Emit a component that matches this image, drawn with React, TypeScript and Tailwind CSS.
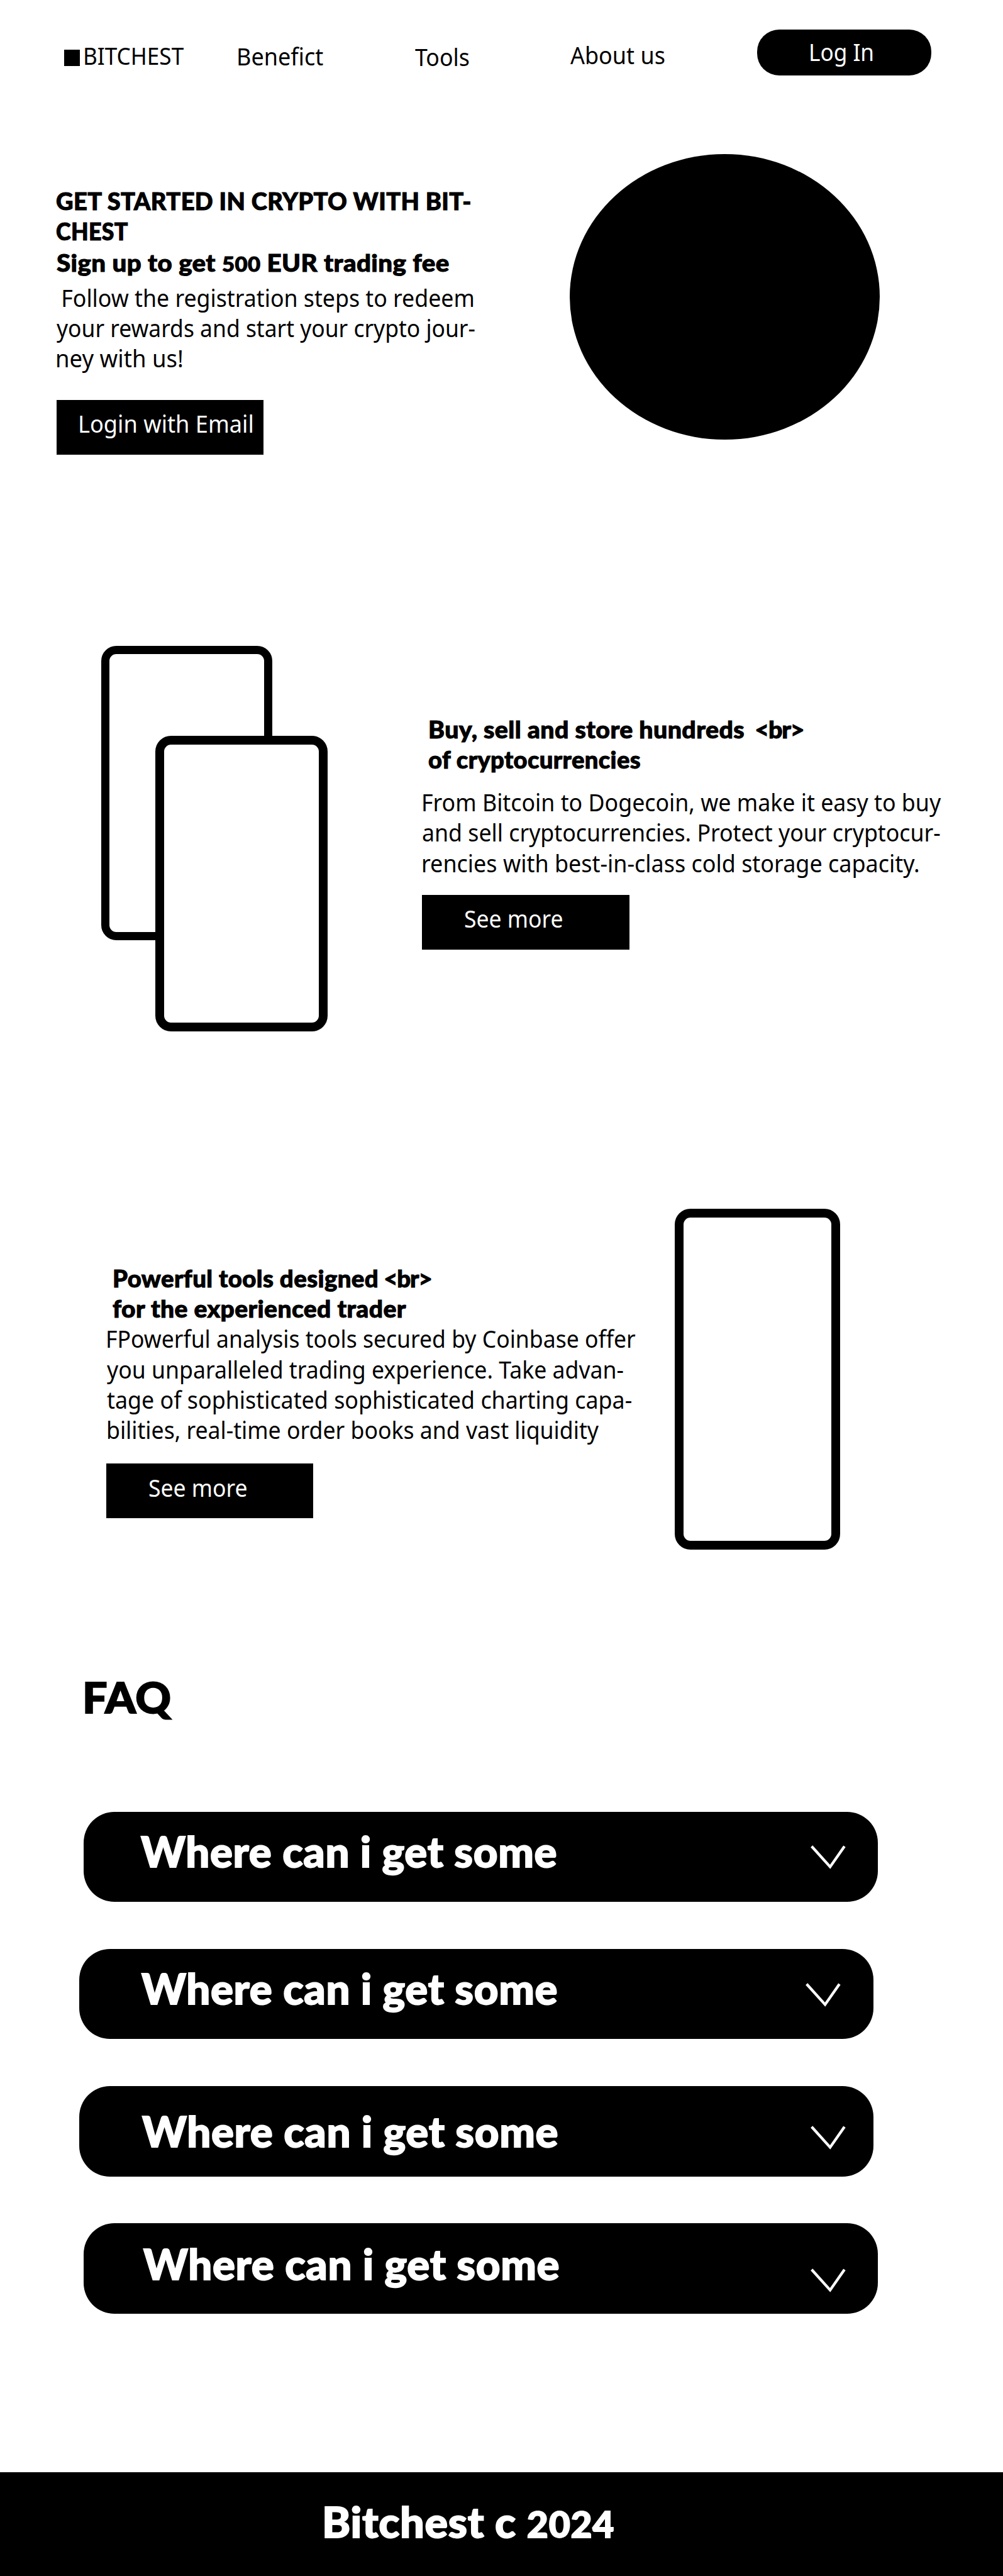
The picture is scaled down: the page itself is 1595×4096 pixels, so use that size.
import type { ReactNode } from "react";

const BODY = "font-['Noto_Sans',sans-serif] text-[37.6px] leading-[48.35px]";
const HEAD =
  "font-['Lato',sans-serif] font-black text-[38.1px] leading-[48px] tracking-[0.01em] [-webkit-text-stroke:1px_currentColor]";
const DISPLAY =
  "font-['Lato',sans-serif] font-black text-[66.6px] leading-[80px] tracking-[0.01em] [-webkit-text-stroke:1.8px_currentColor]";

function Line({ className, children }: { className: string; children: ReactNode }) {
  return (
    <span className={`block w-fit origin-left whitespace-pre ${className}`}>{children}</span>
  );
}

// Digits drawn slightly smaller than the capitals around them.
function Digits({ children }: { children: ReactNode }) {
  return <span className="text-[0.86em] leading-none">{children}</span>;
}

function SeeMore() {
  return (
    <button className="flex h-[87.4px] w-[329.6px] items-start bg-black pl-[67px] pt-[14.8px] text-white">
      <Line className="scale-x-[0.945]">See more</Line>
    </button>
  );
}

const faqs = [
  { box: "ml-[133.3px]", text: "ml-[90.4px] mt-[22.3px]", icon: "left-[1155.5px] top-[53.5px]" },
  { box: "ml-[125.5px]", text: "ml-[99px] mt-[21.7px]", icon: "left-[1155.5px] top-[54.4px]" },
  { box: "ml-[125.5px]", text: "ml-[100.7px] mt-[30.7px]", icon: "left-[1163.3px] top-[63px]" },
  { box: "ml-[133.3px]", text: "ml-[94.7px] mt-[23.8px]", icon: "left-[1155.5px] top-[71.8px]" },
];

export default function App() {
  return (
    <div className={`flex h-[4096px] w-[1595px] flex-col overflow-hidden bg-white text-black ${BODY}`}>
      <header className="grid h-[200px] shrink-0 grid-cols-[274.5px_283.4px_247.7px_296.9px_277.3px] items-start pl-[101.7px]">
        <div className="flex">
          <span className="mt-[79px] size-[25.6px] bg-black" />
          <Line className="ml-[4.6px] mt-[65.1px] scale-x-[0.935]">BITCHEST</Line>
        </div>
        <Line className="mt-[65.8px] scale-x-[0.958]">Benefict</Line>
        <Line className="mt-[66.5px] scale-x-[0.949]">Tools</Line>
        <Line className="mt-[64.4px] scale-x-[0.957]">About us</Line>
        <button className="mt-[47.4px] flex h-[72.2px] items-start rounded-[35px] bg-black pl-[81.6px] pt-[11.5px] text-white">
          <Line className="scale-x-[0.935]">Log In</Line>
        </button>
      </header>

      <section className="flex h-[780px] shrink-0 items-start pl-[89.7px]">
        <div className="w-[816.8px] pt-[95.3px]">
          <h1 className={HEAD}>
            <Line className="-ml-px scale-x-[0.999]">GET STARTED IN CRYPTO WITH BIT-</Line>
            <Line className="-ml-px scale-x-[0.938]">CHEST</Line>
          </h1>
          <h2 className={`mt-[1.9px] ${HEAD}`}>
            <Line className="scale-x-[1.058]">
              Sign up to get <Digits>500</Digits> EUR trading fee
            </Line>
          </h2>
          <p className="mt-[8.6px]">
            <Line className="-ml-[2px] scale-x-[0.95]">{" Follow the registration steps to redeem"}</Line>
            <Line className="scale-x-[0.943]">your rewards and start your crypto jour-</Line>
            <Line className="-ml-[2px] scale-x-[0.972]">ney with us!</Line>
          </p>
          <button className="mt-[40.7px] flex h-[87.4px] w-[329.4px] items-start bg-black pl-[34.2px] pt-[14.7px] text-white">
            <Line className="scale-x-[0.963]">Login with Email</Line>
          </button>
        </div>
        <div className="mt-[45.1px] h-[453.8px] w-[492.5px] rounded-[50%] bg-black" />
      </section>

      <section className="flex h-[900px] shrink-0 items-start pl-[160.8px]">
        <div className="mt-[47.1px] grid w-[359.8px] shrink-0">
          <div className="h-[468.2px] w-[272.3px] rounded-[24px] border-[13.5px] border-black bg-white [grid-area:1/1]" />
          <div className="ml-[86px] mt-[142.9px] h-[469.9px] w-[273.8px] rounded-[25px] border-[14.8px] border-black bg-white [grid-area:1/1]" />
        </div>
        <div className="ml-[150.7px] pt-[154.6px]">
          <h2 className={`ml-[10px] ${HEAD}`}>
            <Line className="scale-x-[1.032]">
              {"Buy, sell and store hundreds"}
              <span className="tracking-[-0.03em]">{"  <br>"}</span>
            </Line>
            <Line className="scale-x-[1.002]">of cryptocurrencies</Line>
          </h2>
          <p className="mt-[21.5px]">
            <Line className="-ml-[1.5px] scale-x-[0.951]">From Bitcoin to Dogecoin, we make it easy to buy</Line>
            <Line className="scale-x-[0.95]">and sell cryptocurrencies. Protect your cryptocur-</Line>
            <Line className="-ml-px scale-x-[0.956]">rencies with best-in-class cold storage capacity.</Line>
          </p>
          <div className="mt-[25.4px]">
            <SeeMore />
          </div>
        </div>
      </section>

      <section className="flex h-[680px] shrink-0 items-start pl-[168.6px]">
        <div className="w-[904.1px] pt-[127.6px]">
          <h2 className={`ml-[10px] ${HEAD}`}>
            <Line className="scale-x-[1.009]">
              {"Powerful tools designed"}
              <span className="tracking-[-0.03em]">{" <br>"}</span>
            </Line>
            <Line className="scale-x-[1.024]">for the experienced trader</Line>
          </h2>
          <p className="mt-[1.8px]">
            <Line className="-ml-px scale-x-[0.946]">FPowerful analysis tools secured by Coinbase offer</Line>
            <Line className="ml-px scale-x-[0.948]">you unparalleled trading experience. Take advan-</Line>
            <Line className="ml-px scale-x-[0.953]">tage of sophisticated sophisticated charting capa-</Line>
            <Line className="scale-x-[0.948]">bilities, real-time order books and vast liquidity</Line>
          </p>
          <div className="mt-[28px]">
            <SeeMore />
          </div>
        </div>
        <div className="mt-[42.4px] h-[541.7px] w-[263.5px] rounded-[25px] border-[14.8px] border-black bg-white" />
      </section>

      <section className={`flex h-[1370.6px] shrink-0 flex-col pt-[98.2px] ${DISPLAY}`}>
        <h2 className="ml-[130.5px]">
          <Line className="scale-x-[1.05]">FAQ</Line>
        </h2>
        <ul className="mt-[142.5px] flex flex-col gap-[74.6px]">
          {faqs.map((f, i) => (
            <li
              key={i}
              className={`relative flex h-[143.6px] w-[1263.1px] items-start rounded-[49px] bg-black text-white ${f.box}`}
            >
              <Line className={`scale-x-[1.009] ${f.text}`}>Where can i get some</Line>
              <svg
                className={`absolute h-[38px] w-[55.5px] overflow-visible ${f.icon}`}
                viewBox="0 0 55.5 38"
                fill="none"
                stroke="currentColor"
                strokeWidth="4.3"
              >
                <path d="M1.7 1.7L31.1 34.4L53.9 1.7" />
              </svg>
            </li>
          ))}
        </ul>
      </section>

      <footer className={`flex-1 bg-black pl-[511.8px] pt-[38.8px] text-white ${DISPLAY}`}>
        <Line className="scale-x-[1.027]">
          Bitchest c <Digits>2024</Digits>
        </Line>
      </footer>
    </div>
  );
}
